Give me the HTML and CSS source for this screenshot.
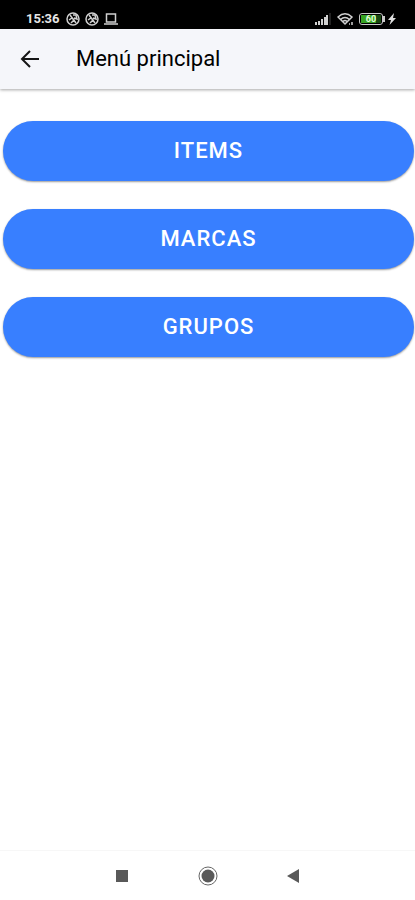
FILE: index.html
```html
<!DOCTYPE html>
<html lang="es">
<head>
<meta charset="utf-8">
<meta name="viewport" content="width=device-width, initial-scale=1">
<title>Menú principal</title>
<link rel="stylesheet" href="styles.css">
</head>
<body>
<div class="status">
  <span class="time">15:36</span>
  <svg class="ball" viewBox="0 0 14 14" stroke-width="1.5"><circle cx="7" cy="7" r="6"/><path d="M4 3l6 8M3 8l3-2 2 2-3 3M7 3l3 0 1 4-3-1"/></svg>
  <svg class="ball" viewBox="0 0 14 14" stroke-width="1.5"><circle cx="7" cy="7" r="6"/><path d="M4 3l6 8M3 8l3-2 2 2-3 3M7 3l3 0 1 4-3-1"/></svg>
  <svg class="laptop" viewBox="0 0 14 14" stroke-width="1.5"><path d="M2.500 2h9v8h-9zM0 12h14"/></svg>
  <span class="spacer"></span>
  <svg class="signal" viewBox="0 0 16 14"><path class="on" d="M1 13v-3M4 13V9M7 13V7M10 13V5M12 13V3"/><path class="off" d="M15 13V1"/></svg>
  <svg class="wifi" viewBox="0 0 18 14" stroke-width="1.5"><path d="M1 5q7-6.500 14 0L8 12zM3.500 7.500q4.500-4 9 0M6 9.500q2-2 4 0M12 12h1M15 10v3"/></svg>
  <span class="battery"><span class="level">60</span></span>
  <svg class="bolt" viewBox="0 0 8 14"><path d="M6 1L0 8h3L1.500 13 8 6H5z"/></svg>
</div>
<header class="toolbar">
  <button class="back" type="button" aria-label="Volver">
    <svg viewBox="0 0 20 20"><path d="M19 10H2M10 2L2 10l8 8"/></svg>
  </button>
  <h1>Menú principal</h1>
</header>
<main class="menu">
  <button class="item" type="button">ITEMS</button>
  <button class="item" type="button">MARCAS</button>
  <button class="item" type="button">GRUPOS</button>
</main>
<nav class="navbar">
  <button type="button" aria-label="Recientes"><svg viewBox="0 0 20 20"><path d="M4 4h12v12H4z"/></svg></button>
  <button type="button" aria-label="Inicio"><svg viewBox="0 0 20 20"><circle class="ring" cx="10" cy="10" r="9"/><circle cx="10" cy="10" r="6.500"/></svg></button>
  <button type="button" aria-label="Atrás"><svg viewBox="0 0 20 20"><path d="M15 3v14L3 10z"/></svg></button>
</nav>
</body>
</html>
```
FILE: styles.css
```css
* { box-sizing: border-box; }
body {
  margin: 0;
  min-height: 100vh;
  display: flex;
  flex-direction: column;
  background: #fff;
  font-family: Roboto, "Liberation Sans", sans-serif;
}
button { border: 0; padding: 0; background: none; font: inherit; }
svg { display: block; flex: none; fill: none; }

.status {
  display: flex;
  align-items: center;
  height: 29px;
  padding: 9px 19px 0 26px;
  background: #000;
  color: #e6e6e6;
}
.status svg { height: 14px; stroke: #d0d0d0; }
.time { font-size: 13px; line-height: 16px; font-weight: 700; margin-right: 6px; }
.ball { width: 14px; margin-right: 5px; }
.laptop { width: 14px; }
.spacer { flex: 1; }
.signal { width: 16px; margin-right: 6px; stroke-width: 2; }
.signal .off { stroke: #444; stroke-width: 1; }
.wifi { width: 18px; margin-right: 4px; }
.battery {
  position: relative;
  width: 24px;
  height: 12px;
  padding: 1px;
  margin-right: 5px;
  border: 1px solid #c8c8c8;
  border-radius: 3px;
}
.battery::after {
  content: "";
  position: absolute;
  left: 23px;
  top: 2px;
  width: 2px;
  height: 6px;
  background: #c8c8c8;
}
.level {
  display: block;
  background: linear-gradient(90deg, #37a322 75%, #17470f 75%);
  color: #e4ffdc;
  font-size: 9px;
  line-height: 8px;
  font-weight: 700;
  text-align: center;
}
.status .bolt { width: 8px; fill: #e0e0e0; stroke: none; }

.toolbar {
  display: flex;
  align-items: center;
  gap: 36px;
  height: 60px;
  padding: 0 20px;
  background: #f5f6fa;
  box-shadow: 0 1px 3px rgba(0, 0, 0, .35);
}
.back svg { width: 20px; height: 20px; stroke: #151515; stroke-width: 2; }
h1 { margin: 0; font-size: 22px; line-height: 28px; font-weight: 400; color: #000; }

.menu {
  flex: 1;
  display: flex;
  flex-direction: column;
  gap: 28px;
  padding: 32px 1px 0 3px;
}
.item {
  height: 60px;
  border-radius: 30px;
  background: #387fff;
  color: #fff;
  font-size: 22px;
  line-height: 28px;
  font-weight: 500;
  letter-spacing: 1px;
  box-shadow: 0 1px 2px rgba(0, 0, 0, .4);
}

.navbar {
  display: flex;
  justify-content: center;
  gap: 66px;
  height: 50px;
  padding-top: 15px;
  border-top: 1px solid #f7f7f7;
}
.navbar svg { width: 20px; height: 20px; fill: #595959; }
.navbar button { height: 20px; }
.navbar .ring { fill: none; stroke: #666; stroke-width: 1; }
```
